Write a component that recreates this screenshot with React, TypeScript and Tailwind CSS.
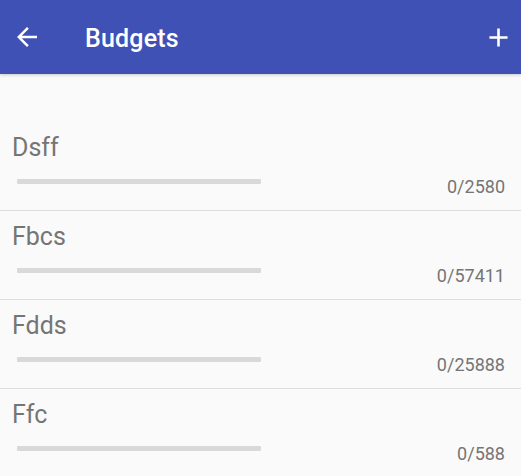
import { MdArrowBack, MdAdd } from "react-icons/md";

const budgets = [
  { name: "Dsff", spent: 0, limit: 2580 },
  { name: "Fbcs", spent: 0, limit: 57411 },
  { name: "Fdds", spent: 0, limit: 25888 },
  { name: "Ffc", spent: 0, limit: 588 },
];

export default function App() {
  return (
    <div className="min-h-screen bg-[#fafafa] font-['Roboto',sans-serif]">
      <header className="h-[74px] bg-[#3f51b5] flex items-center pl-[12px] pr-[7px] text-white shadow-[0_1px_3px_rgba(0,0,0,0.2)]">
        <MdArrowBack className="w-[30px] h-[30px]" />
        <h1 className="ml-[43px] mt-[3px] text-[25px] font-medium leading-none tracking-[0.2px]">Budgets</h1>
        <MdAdd className="ml-auto w-[31px] h-[31px]" />
      </header>

      <div className="pt-[48px]">
        {budgets.map((b) => (
          <div key={b.name} className="h-[89px] border-b border-[#dedede] pl-[12px] pr-[16px] pt-[12px]">
            <div className="text-[25px] leading-[28px] text-[#757575]">{b.name}</div>
            <div className="flex items-end justify-between">
              <div className="ml-[5px] mt-[17px] h-[5px] w-[244px] bg-[#d9d9d9] rounded-[1px] self-start" />
              <div className="text-[18px] leading-[20px] text-[#757575] mt-[15px]">
                {b.spent}/{b.limit}
              </div>
            </div>
          </div>
        ))}
      </div>
    </div>
  );
}
